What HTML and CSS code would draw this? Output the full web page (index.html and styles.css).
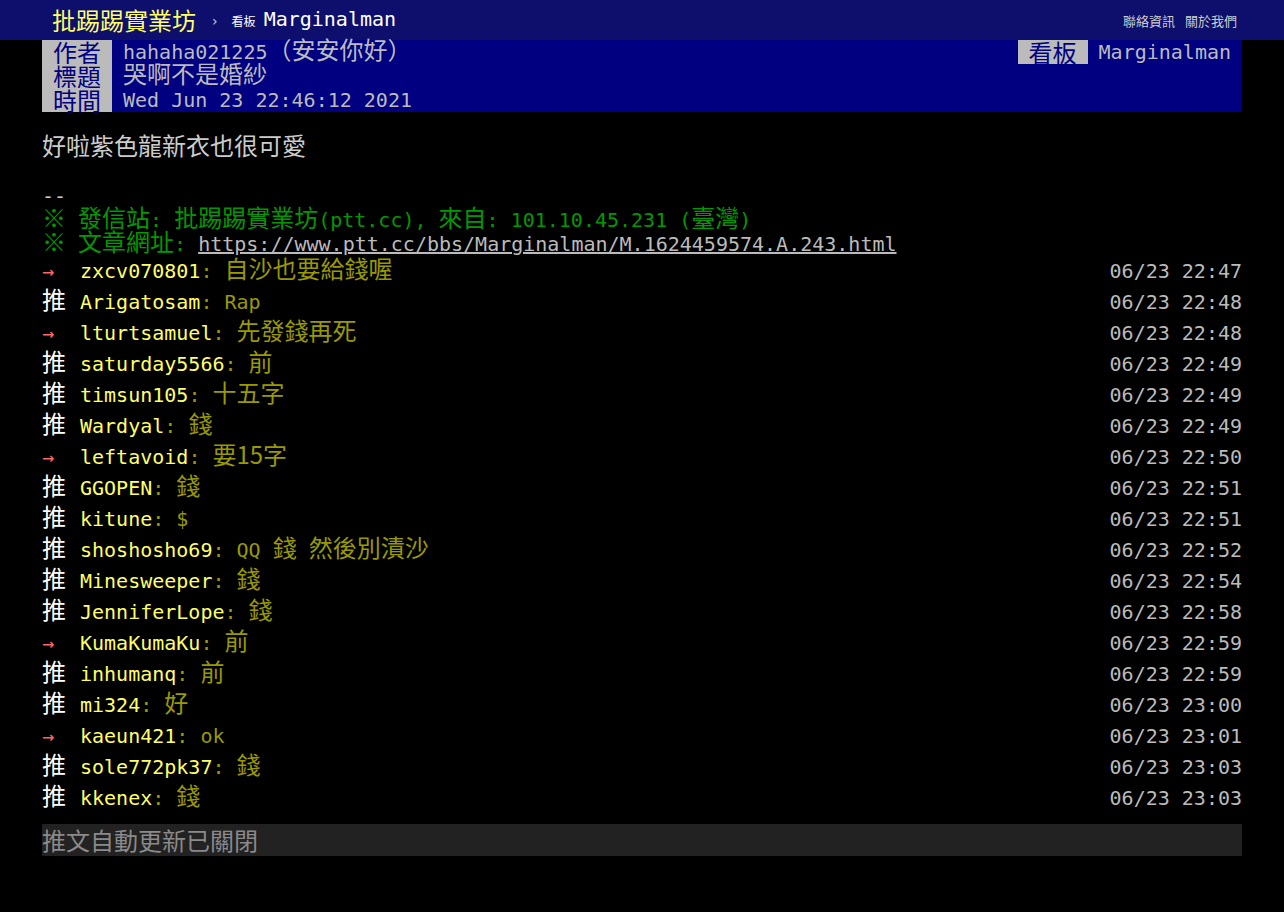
FILE: index.html
```html
<!DOCTYPE html>
<html lang="zh-Hant">
<head>
<meta charset="utf-8">
<title>[問卦] 哭啊不是婚紗 - 看板 Marginalman - 批踢踢實業坊</title>
<link rel="stylesheet" href="styles.css">
</head>
<body>
<div class="topbar-wrap">
  <div class="topbar">
    <a class="logo c" href="#">批踢踢實業坊</a>
    <span class="sep">›</span>
    <a class="board" href="#"><span class="board-label">看板</span>Marginalman</a>
    <div class="right-links">
      <a href="#">聯絡資訊</a>
      <a href="#">關於我們</a>
    </div>
  </div>
</div>

<div class="main">
  <div class="meta">
    <div class="meta-row">
      <span class="meta-tag c">作者</span>
      <span class="meta-value">hahaha021225<span class="c">（安安你好）</span></span>
      <span class="meta-board">
        <span class="meta-tag c">看板</span>
        <span class="meta-value">Marginalman</span>
      </span>
    </div>
    <div class="meta-row">
      <span class="meta-tag c">標題</span>
      <span class="meta-value"><span class="c">哭啊不是婚紗</span></span>
    </div>
    <div class="meta-row">
      <span class="meta-tag c">時間</span>
      <span class="meta-value">Wed Jun 23 22:46:12 2021</span>
    </div>
  </div>

  <div class="content">
    <div class="line"></div>
    <div class="line"><span class="c">好啦紫色龍新衣也很可愛</span></div>
    <div class="line"></div>
    <div class="line">--</div>
    <div class="line green"><span class="c">※</span> <span class="c">發信站</span>: <span class="c">批踢踢實業坊</span>(ptt.cc), <span class="c">來自</span>: 101.10.45.231 (<span class="c">臺灣</span>)</div>
    <div class="line green"><span class="c">※</span> <span class="c">文章網址</span>: <a class="link" href="#">https://www.ptt.cc/bbs/Marginalman/M.1624459574.A.243.html</a></div>

    <div class="push"><span class="push-tag arrow">→</span><span class="push-user">zxcv070801</span><span class="push-content">: <span class="c">自沙也要給錢喔</span></span><span class="push-time">06/23 22:47</span></div>
    <div class="push"><span class="push-tag c">推</span><span class="push-user">Arigatosam</span><span class="push-content">: Rap</span><span class="push-time">06/23 22:48</span></div>
    <div class="push"><span class="push-tag arrow">→</span><span class="push-user">lturtsamuel</span><span class="push-content">: <span class="c">先發錢再死</span></span><span class="push-time">06/23 22:48</span></div>
    <div class="push"><span class="push-tag c">推</span><span class="push-user">saturday5566</span><span class="push-content">: <span class="c">前</span></span><span class="push-time">06/23 22:49</span></div>
    <div class="push"><span class="push-tag c">推</span><span class="push-user">timsun105</span><span class="push-content">: <span class="c">十五字</span></span><span class="push-time">06/23 22:49</span></div>
    <div class="push"><span class="push-tag c">推</span><span class="push-user">Wardyal</span><span class="push-content">: <span class="c">錢</span></span><span class="push-time">06/23 22:49</span></div>
    <div class="push"><span class="push-tag arrow">→</span><span class="push-user">leftavoid</span><span class="push-content">: <span class="c">要15字</span></span><span class="push-time">06/23 22:50</span></div>
    <div class="push"><span class="push-tag c">推</span><span class="push-user">GGOPEN</span><span class="push-content">: <span class="c">錢</span></span><span class="push-time">06/23 22:51</span></div>
    <div class="push"><span class="push-tag c">推</span><span class="push-user">kitune</span><span class="push-content">: $</span><span class="push-time">06/23 22:51</span></div>
    <div class="push"><span class="push-tag c">推</span><span class="push-user">shoshosho69</span><span class="push-content">: QQ <span class="c">錢</span> <span class="c">然後別漬沙</span></span><span class="push-time">06/23 22:52</span></div>
    <div class="push"><span class="push-tag c">推</span><span class="push-user">Minesweeper</span><span class="push-content">: <span class="c">錢</span></span><span class="push-time">06/23 22:54</span></div>
    <div class="push"><span class="push-tag c">推</span><span class="push-user">JenniferLope</span><span class="push-content">: <span class="c">錢</span></span><span class="push-time">06/23 22:58</span></div>
    <div class="push"><span class="push-tag arrow">→</span><span class="push-user">KumaKumaKu</span><span class="push-content">: <span class="c">前</span></span><span class="push-time">06/23 22:59</span></div>
    <div class="push"><span class="push-tag c">推</span><span class="push-user">inhumanq</span><span class="push-content">: <span class="c">前</span></span><span class="push-time">06/23 22:59</span></div>
    <div class="push"><span class="push-tag c">推</span><span class="push-user">mi324</span><span class="push-content">: <span class="c">好</span></span><span class="push-time">06/23 23:00</span></div>
    <div class="push"><span class="push-tag arrow">→</span><span class="push-user">kaeun421</span><span class="push-content">: ok</span><span class="push-time">06/23 23:01</span></div>
    <div class="push"><span class="push-tag c">推</span><span class="push-user">sole772pk37</span><span class="push-content">: <span class="c">錢</span></span><span class="push-time">06/23 23:03</span></div>
    <div class="push"><span class="push-tag c">推</span><span class="push-user">kkenex</span><span class="push-content">: <span class="c">錢</span></span><span class="push-time">06/23 23:03</span></div>
  </div>

  <div class="autoupdate c">推文自動更新已關閉</div>
</div>
</body>
</html>
```

FILE: styles.css
```css
html, body {
  margin: 0;
  padding: 0;
  background: #000;
}

body {
  color: #ccc;
  font-family: "DejaVu Sans Mono", "Noto Sans CJK TC", monospace;
  font-size: 20px;
}

a {
  color: inherit;
  text-decoration: none;
}

/* CJK runs: full-width glyphs twice the width of the half-width mono ones */
.c {
  font-family: "Noto Sans CJK TC", sans-serif;
  font-size: 24px;
  line-height: 0;
}

/* top bar */
.topbar-wrap {
  background: #0e0e6c;
  height: 40px;
}

.topbar {
  width: 1200px;
  margin: 0 auto;
  height: 40px;
  box-sizing: border-box;
  padding: 0 5px 0 10px;
  display: flex;
  align-items: center;
}

.logo {
  color: #ffff66;
  line-height: 40px;
}

.sep {
  color: #ccc;
  font-size: 14px;
  margin: 2px 14px 0 16px;
  font-family: "DejaVu Sans", sans-serif;
}

.board {
  color: #fff;
  font-size: 20px;
  line-height: 40px;
}

.board-label {
  font-family: "Noto Sans CJK TC", sans-serif;
  font-size: 12px;
  margin-right: 8px;
}

.right-links {
  margin-left: auto;
  display: flex;
  gap: 10px;
  font-family: "Noto Sans CJK TC", sans-serif;
  font-size: 13px;
}

.right-links a {
  color: #ccc;
}

/* main */
.main {
  width: 1200px;
  margin: 0 auto;
}

.meta {
  background: #000080;
}

.meta-row {
  display: flex;
  height: 24px;
}

.meta-tag {
  width: 70px;
  flex: none;
  background: #bbb;
  color: #000080;
  text-align: center;
  height: 24px;
  line-height: 23px;
}

.meta-value {
  color: #bbb;
  padding: 0 11px;
  white-space: pre;
  line-height: 24px;
}

.meta-board {
  margin-left: auto;
  display: flex;
}

.line {
  height: 24px;
  line-height: 24px;
  white-space: pre;
  color: #ccc;
}

.green {
  color: #090;
}

.link {
  color: #bbb;
  text-decoration: underline;
}

.push {
  height: 31px;
  line-height: 31px;
  white-space: pre;
}

.push-tag {
  display: inline-block;
  width: 38px;
  color: #fff;
  line-height: 0;
}

.push-tag.arrow {
  color: #f66;
}

.push-user {
  color: #ffff66;
}

.push-content {
  color: #990;
}

.push-time {
  float: right;
  color: #bbb;
}

.autoupdate {
  margin-top: 10px;
  background: #222;
  color: #8a8a8a;
  height: 32px;
  line-height: 32px;
}
```
